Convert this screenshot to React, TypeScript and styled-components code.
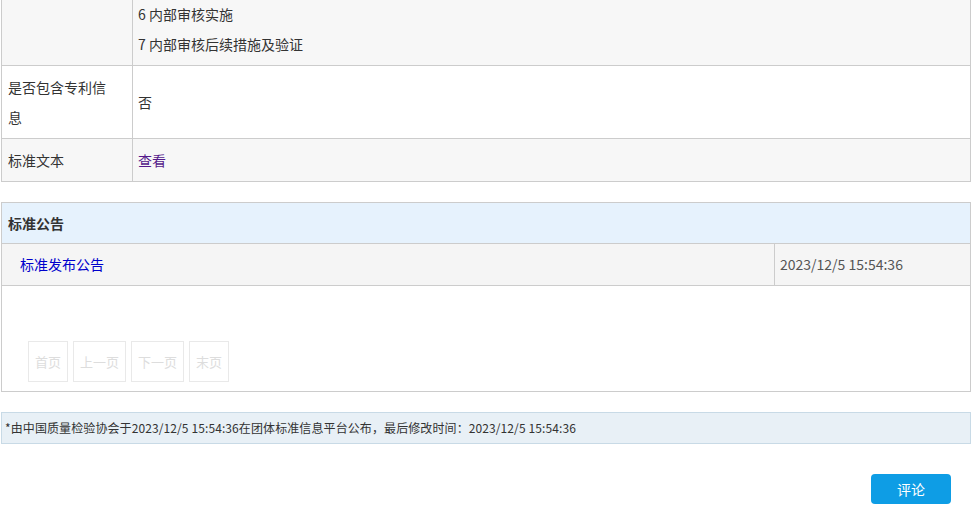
import React from "react";
import styled, { createGlobalStyle } from "styled-components";

const GlobalStyle = createGlobalStyle`
    html, body {
        margin: 0;
        padding: 0;
        background: #fff;
    }
    body {
        font-family: "Noto Sans CJK SC", "Noto Sans", sans-serif;
        font-size: 14px;
        color: #333;
    }
`

const Page = styled.div`
    width: 970px;
    margin: -7px 0 0 1px;
`

const InfoTable = styled.div`
    border: 1px solid #ccc;
    border-top: none;
`

const InfoRow = styled.div<{ $shaded?: boolean; $last?: boolean }>`
    display: grid;
    grid-template-columns: 131px 1fr;
    background: ${p => (p.$shaded ? "#f7f7f7" : "#fff")};
    border-bottom: ${p => (p.$last ? "none" : "1px solid #ccc")};
`

const LabelCell = styled.div`
    padding: 6px 20px 6px 6px;
    line-height: 30px;
    border-right: 1px solid #ccc;
    word-break: break-all;
`

const ValueCell = styled.div<{ $middle?: boolean }>`
    padding: 6px 5px;
    line-height: 30px;
    display: ${p => (p.$middle ? "flex" : "block")};
    align-items: center;
`

const Line = styled.div``

const ViewLink = styled.a`
    color: #551a8b;
    text-decoration: none;
    cursor: pointer;
`

const Section = styled.div`
    margin-top: 20px;
    border: 1px solid #ccc;
`

const SectionHeader = styled.div`
    height: 40px;
    line-height: 40px;
    padding: 0 6px;
    background: #e6f2fd;
    font-weight: bold;
    font-size: 14px;
    border-bottom: 1px solid #ccc;
`

const NoticeRow = styled.div`
    display: grid;
    grid-template-columns: 773px 1fr;
    background: #f5f5f5;
    border-bottom: 1px solid #ccc;
    height: 41px;
    line-height: 41px;
`

const NoticeTitle = styled.div`
    padding-left: 18px;
    border-right: 1px solid #ccc;
    font-size: 14px;
`

const NoticeLink = styled.a`
    color: #0000cc;
    text-decoration: none;
    cursor: pointer;
`

const NoticeDate = styled.div`
    padding-left: 5px;
    color: #555;
    font-size: 14px;
`

const Pager = styled.div`
    display: flex;
    gap: 5px;
    padding: 55px 0 9px 26px;
`

const PageButton = styled.div`
    height: 39px;
    line-height: 39px;
    padding: 0 6px;
    border: 1px solid #e9e9e9;
    color: #ddd;
    font-size: 13px;
`

const Footnote = styled.div`
    margin-top: 20px;
    height: 30px;
    line-height: 30px;
    padding: 0 3px;
    background: #e8f0f6;
    border: 1px solid #c8dae6;
    font-size: 12px;
    letter-spacing: 0.1px;
    color: #333;
`

const Actions = styled.div`
    display: flex;
    justify-content: flex-end;
    padding: 30px 20px 0 0;
`

const CommentButton = styled.button`
    width: 80px;
    height: 30px;
    border: none;
    border-radius: 4px;
    background: #0e9de5;
    color: #fff;
    font-family: inherit;
    font-size: 14px;
    cursor: pointer;
`

const pages = ["首页", "上一页", "下一页", "末页"];

const App: React.FC = () => {
    return (
        <>
            <GlobalStyle />
            <Page>
                <InfoTable>
                    <InfoRow $shaded>
                        <LabelCell />
                        <ValueCell>
                            <Line>6 内部审核实施</Line>
                            <Line>7 内部审核后续措施及验证</Line>
                        </ValueCell>
                    </InfoRow>
                    <InfoRow>
                        <LabelCell>是否包含专利信息</LabelCell>
                        <ValueCell $middle>否</ValueCell>
                    </InfoRow>
                    <InfoRow $shaded $last>
                        <LabelCell>标准文本</LabelCell>
                        <ValueCell>
                            <ViewLink>查看</ViewLink>
                        </ValueCell>
                    </InfoRow>
                </InfoTable>

                <Section>
                    <SectionHeader>标准公告</SectionHeader>
                    <NoticeRow>
                        <NoticeTitle>
                            <NoticeLink>标准发布公告</NoticeLink>
                        </NoticeTitle>
                        <NoticeDate>2023/12/5 15:54:36</NoticeDate>
                    </NoticeRow>
                    <Pager>
                        {pages.map(p => (
                            <PageButton key={p}>{p}</PageButton>
                        ))}
                    </Pager>
                </Section>

                <Footnote>
                    *由中国质量检验协会于2023/12/5 15:54:36在团体标准信息平台公布，最后修改时间：2023/12/5 15:54:36
                </Footnote>

                <Actions>
                    <CommentButton>评论</CommentButton>
                </Actions>
            </Page>
        </>
    );
};

export default App;
